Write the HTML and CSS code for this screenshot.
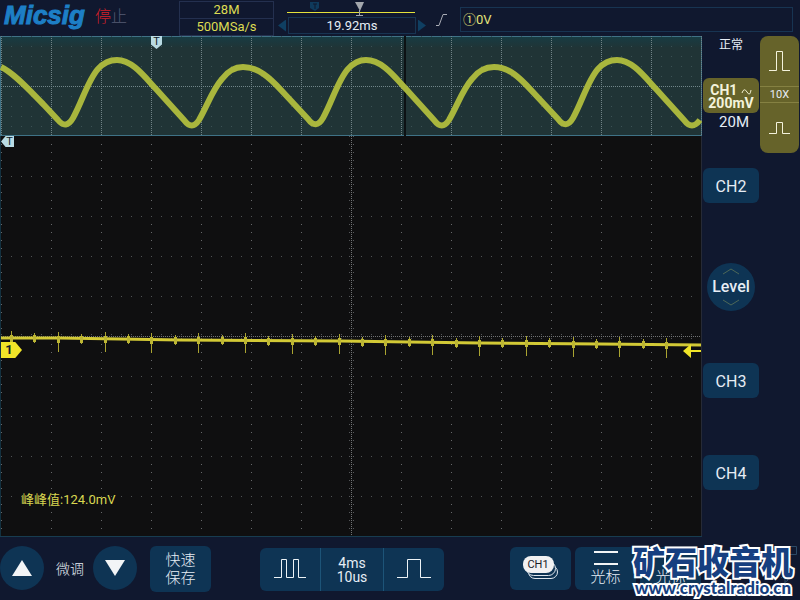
FILE: index.html
```html
<!DOCTYPE html>
<html lang="zh-CN">
<head>
    <meta charset="UTF-8">
    <meta name="viewport" content="width=device-width, initial-scale=1.0">
    <title>Micsig</title>
    <link rel="stylesheet" href="styles.css">
</head>
<body>
<header class="topbar">
    <div class="brand">Micsig</div>
    <div class="status"><span class="status-stop">停</span>止</div>
    <div class="sampling">
        <div>28M</div>
        <div>500MSa/s</div>
    </div>
    <div class="position">
        <svg class="position-line" viewBox="0 0 148 17" width="148" height="17">
            <path d="M32 2h9v6l-4 3l-5 -3z" fill="#0f3a5c"/>
            <path d="M35 4h4M37 4v5" stroke="#10182f"/>
            <path d="M9 12.500h128" stroke="#e6e23a"/>
            <path d="M77 2h9l-4 9z" fill="#a3a7ad"/>
            <path d="M81.500 10v5M78 15.500h7" stroke="#a3a7ad"/>
        </svg>
        <div class="position-row">
            <button class="step step-left" aria-label="left"></button>
            <div class="position-value">19.92ms</div>
            <button class="step step-right" aria-label="right"></button>
        </div>
    </div>
    <svg class="slope" viewBox="0 0 12 14" width="12" height="14">
        <path d="M0 12.500h3L7 1.500h4" fill="none" stroke="#a9acb5"/>
    </svg>
    <div class="trigger">①0V</div>
</header>

<main class="content">
    <section class="scope">
        <div class="overview">
            <svg viewBox="0 0 702 100" preserveAspectRatio="none">
                <defs>
                    <pattern id="fineDots" width="10" height="10" patternUnits="userSpaceOnUse">
                        <rect x="1" y="0" width="1" height="1" fill="#3b5154"/>
                    </pattern>
                    <pattern id="overviewColumns" width="50" height="2" patternUnits="userSpaceOnUse">
                        <rect x="1" y="0" width="1" height="1" fill="#6f8286"/>
                    </pattern>
                </defs>
                <rect width="702" height="100" fill="url(#fineDots)"/>
                <rect width="702" height="100" fill="url(#overviewColumns)"/>
                <path d="M1 50.500H701" stroke="#71868a" stroke-dasharray="1 1"/>
                <rect x="404" width="2" height="100" fill="#0c1113"/>
                <path class="wave" d="M1 31C14 37 30 55 44 69L58 84Q66 94 73 82C82 66 88 44 98 33Q106 24 117 24C132 24 144 40 156 53L184 84Q192 95 199 84C208 68 213 53 222 43Q231 31 243 31C258 31 270 42 281 54L308 83Q316 94 323 82C332 66 338 44 348 33Q356 24 366 24C382 24 394 40 406 53L434 84Q442 95 449 84C458 68 463 53 472 43Q481 31 494 31C509 31 520 42 531 54L558 83Q566 94 573 82C582 66 588 44 598 33Q606 24 617 24C632 24 644 40 656 53L684 84Q692 95 700 84"/>
            </svg>
            <span class="marker marker-top">T</span>
        </div>
        <div class="display">
            <svg viewBox="0 0 702 400" preserveAspectRatio="none">
                <defs>
                    <pattern id="columns" width="50" height="8" patternUnits="userSpaceOnUse">
                        <rect x="1" y="0" width="1" height="1" fill="#66686a"/>
                    </pattern>
                    <pattern id="rows" width="10" height="40" patternUnits="userSpaceOnUse">
                        <rect x="1" y="0" width="1" height="1" fill="#505254"/>
                    </pattern>
                </defs>
                <rect y="1" width="700" height="399" fill="url(#columns)"/>
                <rect y="1" width="700" height="399" fill="url(#rows)"/>
                <path d="M351.500 0V400M1 200.500H701" stroke="#707274" stroke-dasharray="1 1"/>
                <path d="M349.500 0V400M353.500 0V400" stroke="#55575a" stroke-dasharray="1 7"/>
                <path d="M1 198.500H701M1 202.500H701" stroke="#55575a" stroke-dasharray="1 9"/>
                <g id="trace" class="trace">
                    <path d="M1 202L60 202L180 204L340 205L480 207L600 208L701 209"/>
                </g>
            </svg>
            <span class="marker marker-left">T</span>
            <span class="channel-flag">1</span>
            <svg class="level-arrow" viewBox="0 0 18 14" width="18" height="14">
                <path d="M0 7L8 0V14zM8 6H18V8H8z" fill="#f0e428"/>
            </svg>
            <div class="measure">峰峰值:124.0mV</div>
        </div>
    </section>

    <aside class="sidebar">
        <div class="channels">
            <div class="mode">正常</div>
            <button class="channel channel-active">CH1 <svg viewBox="0 0 11 7" width="11" height="7"><path d="M1 5Q3 -1 6 4T10 2" fill="none" stroke="#f2f0d0"/></svg><br>200mV</button>
            <div class="bandwidth">20M</div>
            <button class="channel channel-2">CH2</button>
            <button class="level">
                <svg viewBox="0 0 18 7" width="18" height="7"><path d="M1 6L9 1L17 6" fill="none" stroke="#4d6858"/></svg>
                Level
                <svg viewBox="0 0 18 7" width="18" height="7"><path d="M1 1L9 6L17 1" fill="none" stroke="#4d6858"/></svg>
            </button>
            <button class="channel channel-3">CH3</button>
            <button class="channel channel-4">CH4</button>
        </div>
        <div class="probe">
            <button aria-label="up">
                <svg viewBox="0 0 22 20" width="22" height="20"><path d="M0 19.500H7.500V.5H13.500V19.500H21" fill="none" stroke="#f4f3dc"/></svg>
            </button>
            <div class="probe-ratio">10X</div>
            <button aria-label="down">
                <svg viewBox="0 0 22 13" width="22" height="13"><path d="M0 11.500H7.500V.5H13.500V11.500H21" fill="none" stroke="#f4f3dc"/></svg>
            </button>
        </div>
    </aside>
</main>

<footer class="toolbar">
    <button class="round" aria-label="up"><svg viewBox="0 0 20 16" width="20" height="16"><path d="M0 16L10 0L20 16z" fill="#f2f4f6"/></svg></button>
    <span class="fine">微调</span>
    <button class="round" aria-label="down"><svg viewBox="0 0 20 16" width="20" height="16"><path d="M0 0L10 16L20 0z" fill="#f2f4f6"/></svg></button>
    <button class="quick">快速<br>保存</button>
    <div class="timebase">
        <button aria-label="slower">
            <svg viewBox="0 0 32 20" width="32" height="20"><path d="M0 18.500H7.500V.5H12.500V18.500H19.500V.5H24.500V18.500H32" fill="none" stroke="#edf3f7"/></svg>
        </button>
        <div class="timebase-value">4ms<br>10us</div>
        <button aria-label="faster">
            <svg viewBox="0 0 34 20" width="34" height="20"><path d="M0 18.500H10.500V.5H23.500V18.500H34" fill="none" stroke="#edf3f7"/></svg>
        </button>
    </div>
    <button class="tool" aria-label="CH1">
        <svg viewBox="0 0 36 24" width="36" height="24">
            <g fill="#0e3454" stroke="#dfe7ee">
                <rect x="5.500" y="9.500" width="29" height="13" rx="6.500"/>
                <rect x="3.500" y="5.500" width="29" height="14" rx="7"/>
            </g>
            <rect x="0" y="0" width="31" height="17" rx="8" fill="#f0f1f2"/>
            <text x="15" y="12" text-anchor="middle" class="tag-text">CH1</text>
        </svg>
    </button>
    <button class="tool">
        <svg viewBox="0 0 24 18" width="24" height="18"><path d="M0 2H24M0 14H24" stroke="#f2f4f6" stroke-width="2"/></svg>
        光标
    </button>
    <button class="tool">
        <svg viewBox="0 0 24 18" width="24" height="18"><path d="M6 0V16M18 0V16" stroke="#f2f4f6" stroke-width="2"/></svg>
        光标
    </button>
    <svg class="storage" viewBox="0 0 20 46" width="20" height="46">
        <path d="M12 1.500h6.500v8h-6.500M3 33l4 -4l4 4M7 29v12M4 40l6 -5" fill="none" stroke="#2c4a66"/>
    </svg>
    <div class="watermark">
        <div class="watermark-name">矿石收音机</div>
        <div class="watermark-url">www.crystalradio.cn</div>
    </div>
</footer>

<script src="script.js"></script>
</body>
</html>
```
FILE: styles.css
```css
* {
    box-sizing: border-box;
}
body {
    margin: 0;
    min-height: 100vh;
    display: flex;
    flex-direction: column;
    background: #10182f;
    color: #e6edf5;
    font-family: Roboto, "Noto Sans CJK SC", sans-serif;
    font-size: 14px;
}
button {
    padding: 0;
    border: none;
    background: #0e3454;
    color: #e6edf5;
    font-family: inherit;
    font-size: 16px;
    cursor: pointer;
}
svg {
    flex: none;
}

/* top bar */
.topbar {
    height: 36px;
    display: flex;
    align-items: flex-start;
    padding-right: 7px;
}
.brand {
    width: 91px;
    padding-left: 4px;
    color: #1d7fc6;
    font-family: "Liberation Sans", sans-serif;
    font-size: 26px;
    font-weight: 700;
    font-style: italic;
    line-height: 30px;
    -webkit-text-stroke: 1px #1d7fc6;
}
.status {
    width: 88px;
    padding-left: 4px;
    color: #565c74;
    font-size: 16px;
    font-weight: 300;
    line-height: 34px;
}
.status-stop {
    color: #d3202a;
}
.sampling {
    width: 95px;
    margin-top: 1px;
    border: 1px solid #24304f;
    color: #dedc52;
    font-size: 13px;
    line-height: 16px;
    text-align: center;
}
.sampling div + div {
    border-top: 1px solid #24304f;
}
.position {
    width: 148px;
    margin-left: 4px;
}
.position-line {
    display: block;
}
.position-row {
    display: flex;
    align-items: center;
    justify-content: space-between;
    height: 17px;
}
.position-value {
    width: 128px;
    border: 1px solid #173452;
    font-size: 13px;
    line-height: 15px;
    text-align: center;
}
.step {
    width: 8px;
    height: 12px;
    background: #0f3f62;
}
.step-left {
    clip-path: polygon(0 50%, 100% 0, 100% 100%);
}
.step-right {
    clip-path: polygon(0 0, 100% 50%, 0 100%);
}
.slope {
    margin: 13px 12px 0 10px;
}
.trigger {
    flex: 1;
    margin-top: 7px;
    padding-left: 2px;
    border: 1px solid #173452;
    color: #e4e37a;
    font-size: 13px;
    line-height: 23px;
}

/* waveforms */
.content {
    flex: 1;
    display: flex;
}
.scope {
    flex: 1;
    display: flex;
    flex-direction: column;
}
.overview, .display {
    position: relative;
}
.overview {
    height: 100px;
    background: linear-gradient(#173c44, #203436 12px);
    outline: 1px solid #3f7286;
    outline-offset: -1px;
}
.display {
    flex: 1;
    background: #0f0f10;
    box-shadow: inset 1px 0 #12303f, inset -1px 0 #262a36, 0 1px #173c50;
}
.overview svg, .display > svg:first-child {
    position: absolute;
    width: 100%;
    height: 100%;
}
.wave {
    fill: none;
    stroke: #a9b63d;
    stroke-width: 6;
    stroke-linejoin: round;
}
.trace path {
    fill: none;
    stroke: #d2c936;
    stroke-width: 3;
}
.trace .spike {
    stroke: #aaa431;
    stroke-width: 1;
}
.trace .burst {
    stroke: #bdb634;
    stroke-width: 3;
}
.marker, .channel-flag {
    position: absolute;
    background: #b9dbe4;
    color: #10202a;
    font-size: 11px;
    text-align: center;
}
.marker-top {
    left: 151px;
    top: 0;
    width: 11px;
    height: 13px;
    line-height: 11px;
    clip-path: polygon(0 0, 100% 0, 100% 65%, 50% 100%, 0 65%);
}
.marker-left {
    left: 1px;
    top: 0;
    width: 13px;
    height: 11px;
    padding-left: 4px;
    line-height: 11px;
    clip-path: polygon(35% 0, 100% 0, 100% 100%, 35% 100%, 0 50%);
}
.channel-flag {
    left: 1px;
    top: 206px;
    width: 21px;
    height: 16px;
    padding-right: 5px;
    background: #f0e428;
    font-size: 13px;
    font-weight: 700;
    line-height: 16px;
    clip-path: polygon(0 0, 68% 0, 100% 50%, 68% 100%, 0 100%);
}
.level-arrow {
    position: absolute;
    right: 1px;
    top: 208px;
}
.measure {
    position: absolute;
    left: 21px;
    bottom: 28px;
    color: #d9d750;
    font-size: 13px;
    line-height: 16px;
}

/* sidebar */
.sidebar {
    width: 98px;
    display: flex;
    align-items: flex-start;
    justify-content: space-between;
    padding-right: 1px;
}
.channels {
    width: 58px;
    display: flex;
    flex-direction: column;
    align-items: center;
}
.mode {
    height: 42px;
    font-size: 12px;
    line-height: 18px;
}
.channel {
    width: 56px;
    height: 35px;
    padding-top: 2px;
    border-radius: 6px;
}
.channel-active {
    background: #66632a;
    color: #f4f3dc;
    font-size: 14px;
    font-weight: 700;
    line-height: 13px;
}
.bandwidth {
    font-size: 15px;
    line-height: 18px;
    padding-left: 6px;
}
.channel-2 {
    margin-top: 37px;
}
.channel-3 {
    margin-top: 52px;
}
.channel-4 {
    margin-top: 57px;
}
.level {
    display: flex;
    flex-direction: column;
    align-items: center;
    justify-content: center;
    width: 48px;
    height: 48px;
    margin-top: 60px;
    border-radius: 50%;
    font-weight: 500;
    line-height: 24px;
}
.probe {
    width: 39px;
    border-radius: 8px;
    background: #66632a;
    overflow: hidden;
}
.probe button {
    display: flex;
    align-items: center;
    justify-content: center;
    width: 100%;
    height: 50px;
    background: none;
}
.probe-ratio {
    border: solid #858142;
    border-width: 1px 0;
    font-size: 11px;
    line-height: 15px;
    text-align: center;
}

/* bottom toolbar */
.toolbar {
    position: relative;
    height: 64px;
    display: flex;
    align-items: center;
}
.round {
    display: flex;
    align-items: center;
    justify-content: center;
    width: 44px;
    height: 44px;
    border-radius: 50%;
}
.fine {
    width: 49px;
    padding-left: 3px;
    font-weight: 300;
    text-align: center;
}
.quick {
    width: 61px;
    height: 46px;
    margin: 2px 49px 0 13px;
    border-radius: 6px;
    font-size: 15px;
    font-weight: 300;
    line-height: 18px;
}
.timebase {
    display: flex;
    width: 184px;
    height: 43px;
    margin: 2px 66px 0 0;
    border-radius: 6px;
    background: #0e3454;
}
.timebase button {
    flex: 1;
    display: flex;
    align-items: center;
    justify-content: center;
    background: none;
}
.timebase-value {
    width: 64px;
    padding-top: 8px;
    border: solid #1d5478;
    border-width: 0 1px;
    line-height: 14px;
    text-align: center;
}
.tool {
    display: flex;
    flex-direction: column;
    align-items: center;
    justify-content: center;
    width: 61px;
    height: 43px;
    margin: 0 4px 0 0;
    border-radius: 6px;
    font-size: 15px;
    font-weight: 300;
    line-height: 18px;
}
.tag-text {
    fill: #1a2028;
    font-size: 11px;
    font-weight: 400;
}
.storage {
    margin-left: auto;
    margin-right: 2px;
}
.watermark {
    position: absolute;
    right: 7px;
    bottom: 3px;
    color: #163f80;
    font-weight: 900;
    text-align: center;
    -webkit-text-stroke: 4px #fff;
    paint-order: stroke fill;
}
.watermark-name {
    font-family: "Noto Sans CJK SC", sans-serif;
    font-size: 32px;
    line-height: 38px;
}
.watermark-url {
    font-family: Lato, sans-serif;
    font-size: 17px;
    line-height: 18px;
}
```
FILE: script.js
```js
// noise spikes riding on the trace, every second one is tall
const trace = document.getElementById('trace');
const count = 29;

for (let i = 0; i < count; i++) {
    const x = Math.round(11 + i * 23.4);
    const y = Math.round(202 + x / 100);
    const tall = i % 2 === 0;
    const spike = document.createElementNS('http://www.w3.org/2000/svg', 'path');
    spike.setAttribute('class', 'spike');
    spike.setAttribute('d', `M${x + 0.5} ${y - (tall ? 7 : 5)}V${y + (tall && i ? 13 : 5)}`);
    trace.appendChild(spike);

    const burst = document.createElementNS('http://www.w3.org/2000/svg', 'path');
    burst.setAttribute('class', 'burst');
    burst.setAttribute('d', `M${x + 0.5} ${y - 3}V${y + 4}`);
    trace.appendChild(burst);
}
```
